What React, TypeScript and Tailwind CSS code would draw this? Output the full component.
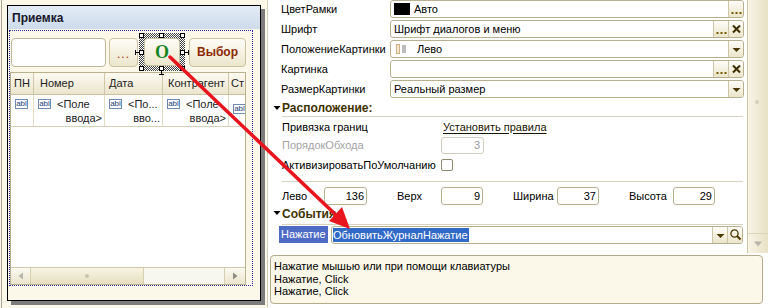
import React from "react";

const CREAM = "bg-[#fbf8e9]";

function DotsIcon() {
  return (
    <svg width="13" height="16" viewBox="0 0 13 16">
      <rect x="1.5" y="11" width="2" height="2" fill="#7a5a00" />
      <rect x="5.5" y="11" width="2" height="2" fill="#7a5a00" />
      <rect x="9.5" y="11" width="2" height="2" fill="#7a5a00" />
    </svg>
  );
}
function XIcon() {
  return (
    <svg width="13" height="16" viewBox="0 0 13 16">
      <path d="M3 4.5 L10 11.5 M10 4.5 L3 11.5" stroke="#3c2e00" strokeWidth="2" />
    </svg>
  );
}
function DropIcon() {
  return (
    <svg width="13" height="16" viewBox="0 0 13 16">
      <polygon points="2.5,7 10.5,7 6.5,11" fill="#4a3800" />
    </svg>
  );
}
function SearchIcon() {
  return (
    <svg width="13" height="16" viewBox="0 0 13 16">
      <circle cx="5.5" cy="6.5" r="3.6" fill="none" stroke="#4a3800" strokeWidth="1.3" />
      <path d="M8 9 L11.5 12.5" stroke="#4a3800" strokeWidth="2" />
    </svg>
  );
}

function FBtn({ children }: { children: React.ReactNode }) {
  return (
    <div className="w-[15px] h-full shrink-0 border-l border-[#cdc6a6] bg-gradient-to-b from-[#fefdf8] to-[#ebe5ca] flex items-center justify-center">
      {children}
    </div>
  );
}

function Field({ children, btns }: { children?: React.ReactNode; btns?: React.ReactNode }) {
  return (
    <div className="w-[354px] h-[18px] rounded-[3px] border border-[#b7af8e] bg-white flex overflow-hidden">
      <div className="flex-1 flex items-center pl-[2px] overflow-hidden whitespace-nowrap">{children}</div>
      {btns}
    </div>
  );
}

function Tri() {
  return (
    <svg width="8" height="16" viewBox="0 0 8 16" className="shrink-0">
      <polygon points="0.5,6 7.5,6 4,10" fill="#000" />
    </svg>
  );
}

function NumBox({ v, w = "w-[43px]" }: { v: string; w?: string }) {
  return (
    <div className={`${w} h-[18px] rounded-[3px] border border-[#b7af8e] bg-white flex items-center justify-end pr-[2px]`}>
      {v}
    </div>
  );
}

function Abl() {
  return (
    <span className="inline-flex items-center justify-center w-[13px] h-[10px] border border-[#6f8bb5] bg-white text-[8px] leading-none text-[#1d3a78] font-['Liberation_Sans',Arial,sans-serif] shrink-0">
      abl
    </span>
  );
}

function Cell({ w, text1, text2, border = true }: { w: string; text1?: string; text2?: string; border?: boolean }) {
  return (
    <div className={`${w} h-full shrink-0 ${border ? "border-r border-[#e2dcc4]" : ""} flex items-start pt-[4px] pl-[4px] pr-[2px] overflow-hidden`}>
      <Abl />
      {text1 && (
        <div className="flex-1 flex flex-col items-end leading-[14px] -mt-[2px] whitespace-nowrap overflow-hidden">
          <div className="self-start pl-[6px]">{text1}</div>
          <div>{text2}</div>
        </div>
      )}
    </div>
  );
}

function Handle({ cls }: { cls: string }) {
  return <div className={`absolute w-[5px] h-[5px] bg-white border border-black ${cls}`} />;
}

function LeftPane() {
  return (
    <div className={`w-[267px] h-full shrink-0 flex ${CREAM}`}>
      <div className="w-[1px] ml-[1px] h-full bg-[#a8a597]" />
      <div className="ml-[5px] mt-[5px] w-[254px] h-[296px] border border-black bg-[#fbf8e9] shadow-[4px_4px_0_#7c7c7c] flex flex-col">
        <div className="h-[23px] shrink-0 bg-gradient-to-b from-[#e3ecf6] to-[#cddbeb] flex items-center pl-[4px] font-bold text-[12px] text-[#16162a]">
          Приемка
        </div>
        <div className="ml-[1px] mt-[1px] w-[244px] h-[256px] border border-dotted border-[#2a2aa8] flex flex-col">
          {/* controls */}
          <div className="mt-[2px] h-[38px] flex items-center shrink-0">
            <div className="ml-[1px] w-[95px] h-[29px] rounded-[4px] border border-[#bdb698] bg-white" />
            <div className="ml-[3px] w-[29px] h-[29px] rounded-[4px] border border-[#c9c2a2] bg-gradient-to-b from-[#fefdf7] to-[#ece6cc] flex items-end justify-center pb-[6px] text-[12px] leading-none text-[#a83000] tracking-[1px]">
              ...
            </div>
            <div className="relative ml-[1px] w-[46px] h-[38px] p-[5px] bg-[repeating-conic-gradient(#444_0%_25%,#fff_0%_50%)] bg-[length:2px_2px]">
              <div className="w-full h-full rounded-[4px] border border-[#c9c2a2] bg-gradient-to-b from-[#fefdf7] to-[#ece6cc] flex items-center justify-center font-['Liberation_Serif',serif] font-bold text-[18px] text-[#17851e]">
                O
              </div>
              <Handle cls="left-0 top-0" />
              <Handle cls="left-[20px] top-0" />
              <Handle cls="right-0 top-0" />
              <Handle cls="left-0 top-[17px]" />
              <Handle cls="right-0 top-[17px]" />
              <Handle cls="left-0 bottom-0" />
              <Handle cls="left-[20px] bottom-0" />
              <Handle cls="right-0 bottom-0" />
              <div className="absolute -left-[4px] top-[19px] w-[4px] h-[1px] bg-black" />
              <div className="absolute -left-[4px] top-[17px] w-[1px] h-[5px] bg-black" />
              <div className="absolute -right-[4px] top-[19px] w-[4px] h-[1px] bg-black" />
              <div className="absolute -right-[4px] top-[17px] w-[1px] h-[5px] bg-black" />
              <div className="absolute left-[22px] -bottom-[4px] w-[1px] h-[4px] bg-black" />
              <div className="absolute left-[20px] -bottom-[4px] w-[5px] h-[1px] bg-black" />
            </div>
            <div className="ml-[4px] w-[57px] h-[29px] rounded-[4px] border border-[#c9c2a2] bg-gradient-to-b from-[#fefdf7] to-[#ece6cc] flex items-center justify-center font-bold text-[12px] text-[#8e2800]">
              Выбор
            </div>
          </div>
          {/* table */}
          <div className="mt-[1px] w-[236px] h-[213px] border border-[#b9b08c] bg-white flex flex-col text-[11px] text-[#222]">
            <div className="h-[22px] shrink-0 flex border-b border-[#c9c1a0] bg-gradient-to-b from-[#fcfaf1] to-[#ebe5cd]">
              <div className="w-[23px] border-r border-[#cfc7a7] flex items-center pl-[3px]">ПН</div>
              <div className="w-[71px] border-r border-[#cfc7a7] flex items-center pl-[6px]">Номер</div>
              <div className="w-[58px] border-r border-[#cfc7a7] flex items-center pl-[4px]">Дата</div>
              <div className="w-[66px] border-r border-[#cfc7a7] flex items-center pl-[5px] whitespace-nowrap overflow-hidden">Контрагент</div>
              <div className="flex-1 flex items-center pl-[2px] overflow-hidden">Ст</div>
            </div>
            <div className="h-[32px] shrink-0 flex border-b border-[#d6d0b6]">
              <Cell w="w-[23px]" />
              <Cell w="w-[71px]" text1="<Поле" text2="ввода>" />
              <Cell w="w-[58px]" text1="<По..." text2="вво..." />
              <Cell w="w-[66px]" text1="<Поле" text2="ввода>" />
              <div className="flex-1 pt-[4px] pl-[4px] overflow-hidden">
                <Abl />
              </div>
            </div>
            <div className="flex-1" />
            <div className="h-[17px] shrink-0 flex border-t border-[#cfc7a7]">
              <div className="w-[20px] border-r border-[#d6cfb0] bg-gradient-to-b from-[#fbfaf2] to-[#ebe5cd] flex items-center justify-center">
                <svg width="8" height="8" viewBox="0 0 8 8"><polygon points="6,0.5 6,7.5 1.5,4" fill="#b8b6ac" /></svg>
              </div>
              <div className="w-[113px] border-r border-[#d6cfb0] bg-gradient-to-b from-[#f7f4e2] to-[#e6dfc0] flex items-center justify-center">
                <div className="w-[4px] h-[4px] rounded-full bg-[#c9c4ad]" />
              </div>
              <div className="w-[81px] border-r border-[#d6cfb0] bg-[#f8f7ef]" />
              <div className="flex-1 bg-gradient-to-b from-[#fbfaf2] to-[#ebe5cd] flex items-center justify-center">
                <svg width="8" height="8" viewBox="0 0 8 8"><polygon points="2,0.5 2,7.5 6.5,4" fill="#8d8b82" /></svg>
              </div>
            </div>
          </div>
        </div>
      </div>
    </div>
  );
}

function PropRow({ label, children }: { label: string; children: React.ReactNode }) {
  return (
    <div className="h-[20px] flex items-start shrink-0">
      <div className="w-[122px] pl-[13px] leading-[18px] whitespace-nowrap">{label}</div>
      {children}
    </div>
  );
}

function RightPane() {
  return (
    <div className="flex-1 h-full flex flex-col bg-white border-l border-[#d3cfb9] text-[11px] text-black">
      <div className="h-[253px] shrink-0 flex">
        <div className="w-[479px] flex flex-col">
          <PropRow label="ЦветРамки">
            <Field btns={<FBtn><DotsIcon /></FBtn>}>
              <div className="w-[16px] h-[12px] bg-black ml-[1px] mr-[4px]" />
              <span>Авто</span>
            </Field>
          </PropRow>
          <PropRow label="Шрифт">
            <Field btns={<><FBtn><DotsIcon /></FBtn><FBtn><XIcon /></FBtn></>}>
              <span className="pl-[1px]">Шрифт диалогов и меню</span>
            </Field>
          </PropRow>
          <PropRow label="ПоложениеКартинки">
            <Field btns={<FBtn><DropIcon /></FBtn>}>
              <svg width="14" height="12" viewBox="0 0 14 12" className="ml-[3px] mr-[7px]">
                <rect x="0.5" y="1.5" width="3" height="9" fill="#f7ead0" stroke="#cfae80" />
                <path d="M6 3h4M6 5h4M6 7h4M6 9h4" stroke="#7a7a7a" strokeWidth="1" />
              </svg>
              <span>Лево</span>
            </Field>
          </PropRow>
          <PropRow label="Картинка">
            <Field btns={<><FBtn><DotsIcon /></FBtn><FBtn><XIcon /></FBtn></>} />
          </PropRow>
          <PropRow label="РазмерКартинки">
            <Field btns={<FBtn><DropIcon /></FBtn>}>
              <span className="pl-[1px]">Реальный размер</span>
            </Field>
          </PropRow>

          <div className="h-[17px] flex pl-[5px] pr-[4px] shrink-0">
            <Tri />
            <div className="flex-1 ml-[1px] border-b border-[#d8d3bf] font-bold text-[12px] leading-[16px] text-[#3f3200]">
              Расположение:
            </div>
          </div>

          <div className="h-[20px] flex items-center shrink-0">
            <div className="w-[173px] pl-[14px] whitespace-nowrap">Привязка границ</div>
            <span className="pl-[2px] underline underline-offset-2 text-[#1a1400]">Установить правила</span>
          </div>
          <div className="h-[18px] flex items-start shrink-0">
            <div className="w-[173px] pl-[14px] whitespace-nowrap leading-[17px] text-[#a3a3a3]">ПорядокОбхода</div>
            <div className="w-[43px] h-[17px] rounded-[3px] border border-[#d2cebd] flex items-center justify-end pr-[3px] text-[#9a9a9a]">
              3
            </div>
          </div>
          <div className="h-[20px] flex items-center shrink-0">
            <div className="w-[173px] pl-[14px] whitespace-nowrap">АктивизироватьПоУмолчанию</div>
            <div className="w-[12px] h-[12px] rounded-[2px] border border-[#8d896d] bg-white" />
          </div>
          <div className="mt-[6px] ml-[14px] mr-[4px] border-b border-[#d8d3bf] shrink-0" />
          <div className="mt-[5px] h-[18px] flex items-center shrink-0 pl-[14px]">
            <div className="w-[42px]">Лево</div>
            <NumBox v="136" />
            <div className="ml-[30px] w-[44px]">Верх</div>
            <NumBox v="9" w="w-[42px]" />
            <div className="ml-[30px] w-[44px]">Ширина</div>
            <NumBox v="37" w="w-[42px]" />
            <div className="ml-[30px] w-[44px]">Высота</div>
            <NumBox v="29" w="w-[42px]" />
          </div>
          <div className="h-[20px] flex pl-[5px] pr-[4px] shrink-0">
            <Tri />
            <div className="flex-1 ml-[1px] border-b border-[#d8d3bf] font-bold text-[12px] leading-[19px] text-[#3f3200]">
              События
            </div>
          </div>
          <div className="h-[19px] flex items-start shrink-0">
            <div className="ml-[11px] mt-[1px] w-[49px] h-[17px] bg-[#4d6bc5] text-white flex items-center pl-[2px] whitespace-nowrap">
              Нажатие
            </div>
            <div className="ml-[3px] mt-[1px] w-[412px] h-[18px] rounded-[3px] border border-[#b7af8e] bg-white flex overflow-hidden">
              <div className="flex-1 flex items-center pl-[1px]">
                <span className="bg-[#3169c6] text-white h-[14px] leading-[14px] pr-[1px] whitespace-nowrap">ОбновитьЖурналНажатие</span>
              </div>
              <FBtn><DropIcon /></FBtn>
              <FBtn><SearchIcon /></FBtn>
            </div>
          </div>
        </div>
        {/* scrollbar */}
        <div className="w-[21px] h-full border-l border-[#cdc6a5] flex flex-col bg-gradient-to-r from-[#f7f4e6] to-[#e8e1c5]">
          <div className="flex-1 relative">
            <div className="absolute left-[7px] top-[100px] w-[4px] h-[4px] rounded-full bg-[#d4cfb8]" />
          </div>
          <div className="h-[20px] border-t border-[#d9d3b8] flex items-center justify-center">
            <svg width="10" height="8" viewBox="0 0 10 8"><polygon points="1,1.5 9,1.5 5,6.5" fill="#b8b6ac" /></svg>
          </div>
        </div>
      </div>
      <div className="mt-[2px] ml-[2px] w-[493px] h-[49px] rounded-[4px] border border-[#b3ab8a] bg-[#fbf8e9] pl-[3px] pt-[4px] leading-[12.5px] whitespace-nowrap">
        <div>Нажатие мышью или при помощи клавиатуры</div>
        <div>Нажатие, Click</div>
        <div>Нажатие, Click</div>
      </div>
    </div>
  );
}

export default function App() {
  return (
    <div className={`relative w-[768px] h-[308px] overflow-hidden flex ${CREAM} font-['Liberation_Sans',Arial,sans-serif] text-[11px]`}>
      <LeftPane />
      <RightPane />
      <svg className="absolute left-0 top-0 pointer-events-none" width="768" height="308" viewBox="0 0 768 308">
        <line x1="170" y1="57" x2="337" y2="216" stroke="#e8141e" strokeWidth="3.5" strokeLinecap="round" />
        <polygon points="350,229 329,221 342,207" fill="#e8141e" />
      </svg>
    </div>
  );
}
